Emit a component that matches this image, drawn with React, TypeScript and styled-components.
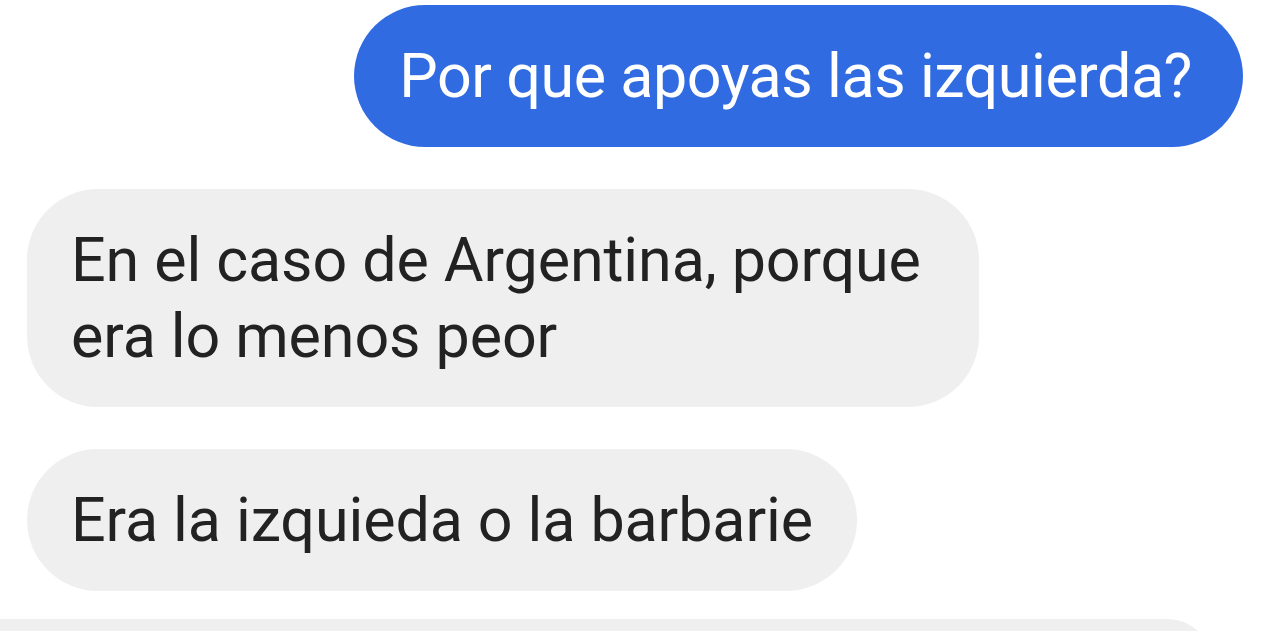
import React from "react";
import styled, { createGlobalStyle } from "styled-components";

const GlobalStyle = createGlobalStyle`
  html, body {
    margin: 0;
    padding: 0;
    background: #ffffff;
    overflow: hidden;
  }
  body {
    font-family: Roboto, "Noto Sans", "Liberation Sans", sans-serif;
  }
`;

const Thread = styled.div`
  display: flex;
  flex-direction: column;
  padding: 5px 28px 0 27px;
  height: 631px;
  box-sizing: border-box;
  overflow: hidden;
`;

const Row = styled.div<{ $mine?: boolean; $gap: number }>`
  display: flex;
  justify-content: ${(p) => (p.$mine ? "flex-end" : "flex-start")};
  margin-top: ${(p) => p.$gap}px;
`;

const Bubble = styled.div<{ $mine?: boolean }>`
  box-sizing: border-box;
  max-width: 952px;
  padding: 33px 44px;
  padding-left: ${(p) => (p.$mine ? 45 : 44)}px;
  padding-right: ${(p) => (p.$mine ? 51 : 44)}px;
  border-radius: 71px;
  background: ${(p) => (p.$mine ? "#306be1" : "#efefef")};
  color: ${(p) => (p.$mine ? "#ffffff" : "#222222")};
  font-size: 61px;
  letter-spacing: ${(p) => (p.$mine ? "-0.45px" : "-0.1px")};
  line-height: 76px;
  font-weight: 400;
`;

const PeekBubble = styled.div`
  margin-left: -27px;
  width: 1213px;
  height: 120px;
  flex-shrink: 0;
  border-radius: 0 46px 0 0;
  background: #efefef;
`;

export default function App() {
  return (
    <>
      <GlobalStyle />
      <Thread>
        <Row $mine $gap={0}>
          <Bubble $mine>Por que apoyas las izquierda?</Bubble>
        </Row>
        <Row $gap={42}>
          <Bubble>En el caso de Argentina, porque era lo menos peor</Bubble>
        </Row>
        <Row $gap={42}>
          <Bubble>Era la izquieda o la barbarie</Bubble>
        </Row>
        <Row $gap={28}>
          <PeekBubble />
        </Row>
      </Thread>
    </>
  );
}
